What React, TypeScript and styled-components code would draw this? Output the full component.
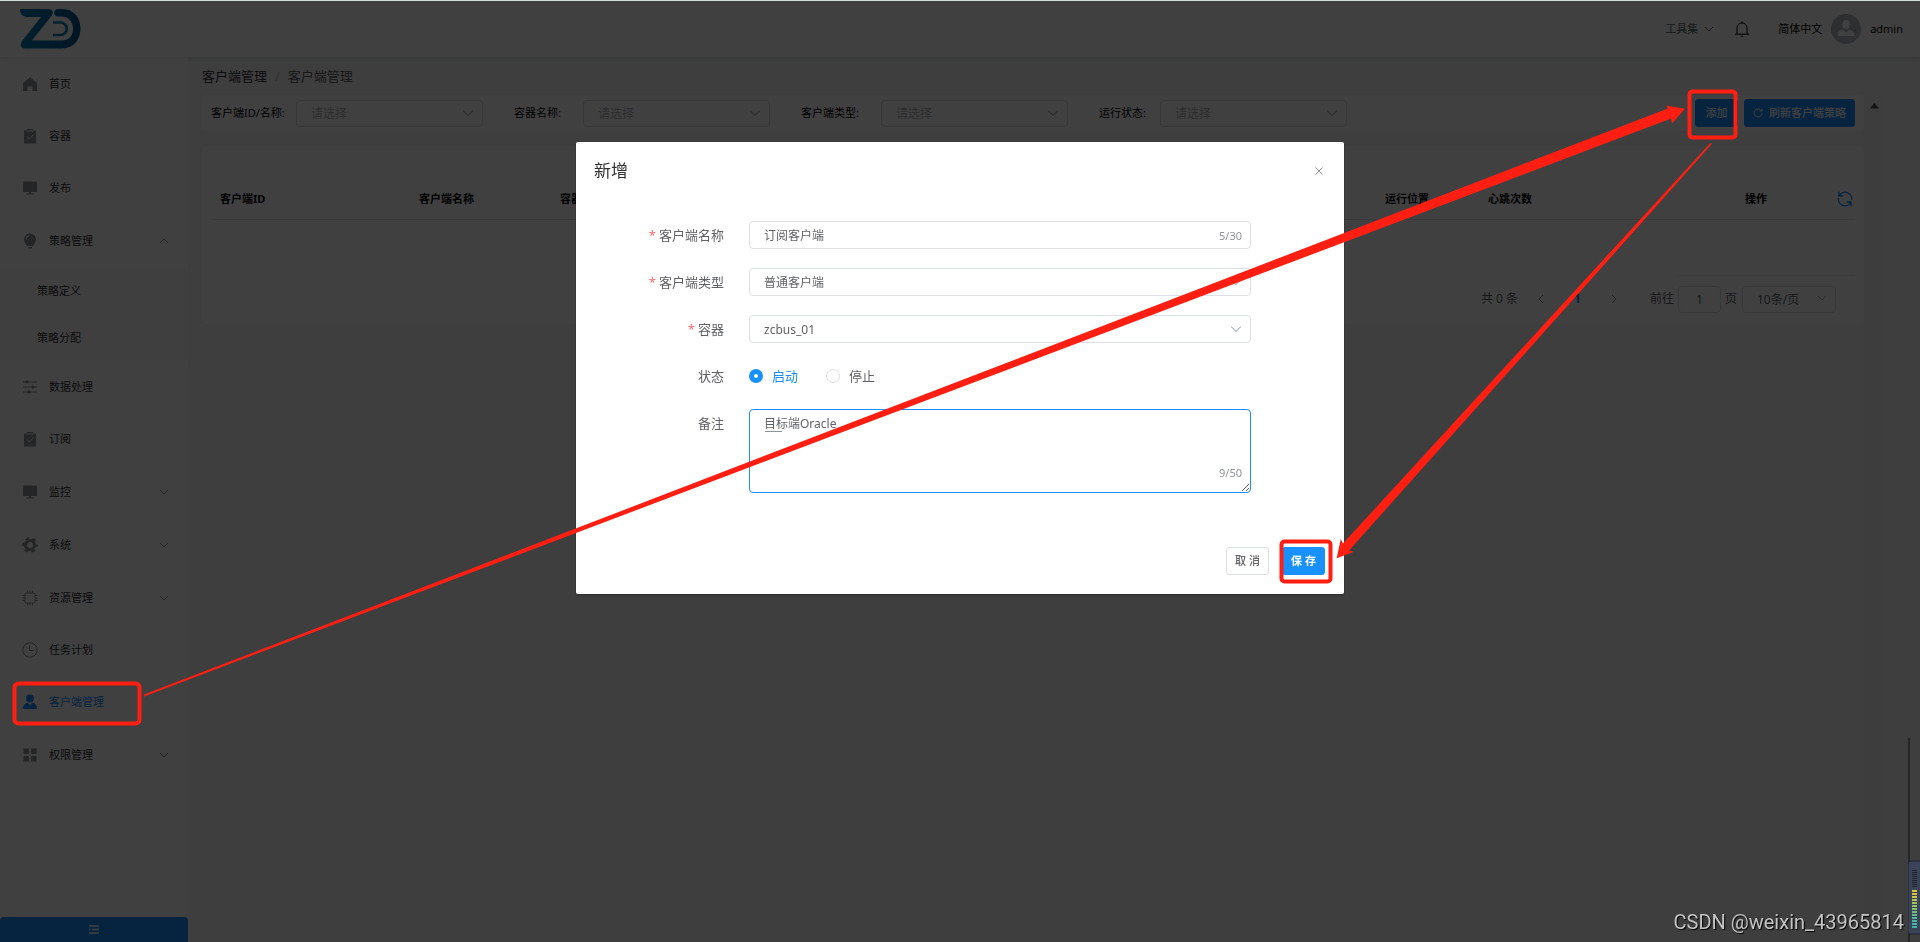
import React, { useState } from 'react';
import styled, { createGlobalStyle, css } from 'styled-components';

const BLUE = '#1890ff';
const RED = '#ff1f12';

const GlobalStyle = createGlobalStyle`
  * { box-sizing: border-box; }
  body {
    margin: 0;
    background: #f5f5f5;
    color: #303133;
    font: 11px/16px "Noto Sans", "Noto Sans CJK SC", sans-serif;
  }
  button, input, select, textarea { font: inherit; color: inherit; margin: 0; }
  a { color: inherit; text-decoration: none; }
`;

/* ---------- page frame ---------- */

const Page = styled.div`
  min-height: 100vh;
  display: flex;
  flex-direction: column;
  overflow: hidden;
`;

const Header = styled.header`
  height: 57px;
  padding: 0 17px 0 19px;
  display: flex;
  align-items: center;
  justify-content: space-between;
  background: #fff;
  box-shadow: 0 1px 6px rgba(0, 21, 41, 0.12);
  position: relative;
`;

const HeaderTools = styled.div`
  display: flex;
  align-items: center;
  color: #000;
`;

const PlainButton = styled.button<{ $muted?: boolean; $gap?: number }>`
  border: 0;
  padding: 0;
  background: none;
  display: flex;
  align-items: center;
  gap: 6px;
  color: ${(p) => (p.$muted ? '#606266' : 'inherit')};
  margin-right: ${(p) => p.$gap ?? 0}px;
`;

const Avatar = styled.span`
  width: 30px;
  height: 30px;
  border-radius: 50%;
  overflow: hidden;
  background: #b4bac4;
  margin-right: 9px;
`;

const Body = styled.div`
  flex: 1;
  display: flex;
`;

const Sidebar = styled.aside`
  width: 188px;
  flex: none;
  display: flex;
  flex-direction: column;
  justify-content: space-between;
  background: #fff;
`;

const Menu = styled.nav`
  padding-top: 1px;
`;

const MenuLink = styled.a<{ $group?: boolean; $active?: boolean }>`
  height: ${(p) => (p.$group ? 53 : 52)}px;
  padding: 0 19px 0 22px;
  display: flex;
  align-items: center;
  gap: 11px;
  color: ${(p) => (p.$active ? BLUE : '#303133')};

  > svg { color: ${(p) => (p.$active ? BLUE : '#909399')}; flex: none; }
`;

const MenuLabel = styled.span`
  flex: 1;
`;

const SubMenu = styled.div`
  background: #fbfbfb;
`;

const SubLink = styled.a`
  height: 47px;
  padding-left: 37px;
  display: flex;
  align-items: center;
`;

const CollapseButton = styled.button`
  height: 25px;
  border: 0;
  border-radius: 4px 4px 0 0;
  background: ${BLUE};
  color: #fff;
  display: flex;
  align-items: center;
  justify-content: center;
`;

const Main = styled.main`
  flex: 1;
  min-width: 0;
  padding: 11px 36px 0 14px;
`;

const Crumbs = styled.nav`
  height: 16px;
  display: flex;
  align-items: center;
  gap: 8px;
  font-size: 13px;
  color: #606266;
`;

const CrumbLink = styled.a`
  color: #303133;
`;

const Slash = styled.span`
  color: #c0c4cc;
`;

const Scroller = styled.div`
  margin-top: 11px;
  display: flex;
`;

const Panels = styled.div`
  flex: 1;
  min-width: 0;
  display: flex;
  flex-direction: column;
  gap: 15px;
`;

const ScrollTrack = styled.div`
  width: 20px;
  height: calc(100vh - 95px);
  margin-bottom: -600px;
  padding-top: 8px;
  background: #f1f1f1;
  display: flex;
  justify-content: center;
  color: #505050;
`;

const Card = styled.section`
  background: #fff;
  border-radius: 5px;
`;

/* ---------- filters ---------- */

const FilterBar = styled(Card)`
  height: 36px;
  padding: 0 9px;
  display: flex;
  align-items: center;
  justify-content: space-between;
`;

const FilterForm = styled.form`
  display: flex;
  gap: 31px;
`;

const Filter = styled.div`
  display: flex;
  align-items: center;
`;

const FilterLabel = styled.label<{ $width: number }>`
  width: ${(p) => p.$width}px;
  color: #000;
`;

const SelectBox = styled.span<{ $width?: number }>`
  position: relative;
  display: block;
  width: ${(p) => (p.$width ? `${p.$width}px` : '100%')};
  color: #b4b8bf;

  > svg {
    position: absolute;
    right: 9px;
    top: 50%;
    margin-top: -6px;
    pointer-events: none;
  }
`;

const field = css`
  display: block;
  width: 100%;
  height: 28px;
  border: 1px solid #dcdfe6;
  border-radius: 4px;
  background: #fff;
  padding: 0 14px;
  font-size: 12px;
  color: #606266;
  outline: none;
`;

const Select = styled.select<{ $empty?: boolean; $short?: boolean }>`
  ${field}
  appearance: none;
  padding-top: 1px;
  height: ${(p) => (p.$short ? 27 : 28)}px;
  color: ${(p) => (p.$empty ? '#b4b8bf' : '#606266')};
`;

const Actions = styled.div`
  display: flex;
  gap: 6px;
`;

const Button = styled.button<{ $primary?: boolean; $bold?: boolean }>`
  height: 28px;
  min-width: 43px;
  justify-content: center;
  padding: 0 8px;
  border: 1px solid ${(p) => (p.$primary ? BLUE : '#dcdfe6')};
  border-radius: 3px;
  background: ${(p) => (p.$primary ? BLUE : '#fff')};
  color: ${(p) => (p.$primary ? '#fff' : '#606266')};
  font-weight: ${(p) => (p.$bold ? 700 : 500)};
  display: flex;
  align-items: center;
  gap: 6px;
  white-space: nowrap;
`;

/* ---------- table ---------- */

const TableCard = styled(Card)`
  height: 178px;
  padding: 34px 9px 0;
`;

const Table = styled.table`
  width: 100%;
  table-layout: fixed;
  border-collapse: collapse;
`;

const Th = styled.th<{ $op?: boolean }>`
  height: 39px;
  padding: ${(p) => (p.$op ? '0 2px 0 68px' : '0 9px')};
  text-align: left;
  font-weight: 700;
  color: #000;
  border-bottom: 1px solid #e4e6eb;
`;

const OpHead = styled.div`
  display: flex;
  align-items: center;
  justify-content: space-between;
`;

const IconButton = styled.button`
  border: 0;
  padding: 0;
  background: none;
  display: flex;
  color: ${BLUE};
`;

const Td = styled.td<{ $line?: boolean }>`
  height: 56px;
  padding: 0;
  border-bottom: 1px solid ${(p) => (p.$line ? '#ebeef5' : 'transparent')};
`;

const Pager = styled.div`
  margin-top: 10px;
  padding-right: 19px;
  display: flex;
  align-items: center;
  justify-content: flex-end;
  font-size: 12px;
  color: #606266;
`;

const PagerNav = styled.div`
  display: flex;
  align-items: center;
  gap: 28px;
  margin: 0 31px 0 18px;
`;

const PagerButton = styled.button<{ $current?: boolean }>`
  border: 0;
  padding: 0;
  background: none;
  display: flex;
  color: ${(p) => (p.$current ? BLUE : '#909399')};
  font-weight: ${(p) => (p.$current ? 700 : 400)};
`;

const JumpLabel = styled.label`
  display: flex;
  align-items: center;
  gap: 4px;
  margin-right: 5px;
`;

const JumpInput = styled.input`
  ${field}
  width: 43px;
  height: 27px;
  padding: 0;
  text-align: center;
`;

/* ---------- dialog ---------- */

const Overlay = styled.div`
  position: fixed;
  inset: 0;
  padding-top: 15vh;
  background: rgba(0, 0, 0, 0.75);
  display: flex;
  justify-content: center;
  align-items: flex-start;
`;

const Dialog = styled.section`
  width: 40%;
  margin-top: 1px;
  background: #fff;
  border-radius: 2px;
  box-shadow: 0 1px 3px rgba(0, 0, 0, 0.3);
  padding: 17px 19px 19px 18px;
`;

const DialogHead = styled.header`
  display: flex;
  align-items: center;
  justify-content: space-between;
  height: 23px;
`;

const DialogTitle = styled.h2`
  margin: 0;
  font-size: 17px;
  line-height: 23px;
  font-weight: 400;
  color: #303133;
`;

const CloseButton = styled.button`
  border: 0;
  background: none;
  padding: 0;
  display: flex;
  color: #909399;
`;

const Form = styled.form`
  margin-top: 39px;
  padding: 0 74px 0 37px;
  display: flex;
  flex-direction: column;
  gap: 19px;
`;

const FormRow = styled.div`
  display: grid;
  grid-template-columns: 93px 1fr;
  column-gap: 25px;
  align-items: start;
`;

const FormLabel = styled.label<{ $required?: boolean }>`
  text-align: right;
  font-size: 13px;
  line-height: 28px;
  color: #606266;
  white-space: nowrap;

  ${(p) =>
    p.$required &&
    css`
      &::before {
        content: '*';
        color: #f56c6c;
        margin-right: 3px;
      }
    `}
`;

const Control = styled.div`
  position: relative;
`;

const TextInput = styled.input`
  ${field}
  padding-right: 50px;
`;

const TextArea = styled.textarea`
  ${field}
  height: 84px;
  padding: 5px 14px;
  line-height: 17px;
  border-color: ${BLUE};
  resize: vertical;
`;

const Counter = styled.span<{ $low?: boolean }>`
  position: absolute;
  right: 9px;
  bottom: ${(p) => (p.$low ? 12 : 5)}px;
  color: #909399;
`;

const Composition = styled.span`
  position: absolute;
  left: 16px;
  top: 22px;
  width: 17px;
  height: 1px;
  background: #909399;
`;

const Radios = styled.div`
  height: 28px;
  display: flex;
  align-items: center;
  gap: 28px;
`;

const RadioLabel = styled.label<{ $on: boolean }>`
  display: flex;
  align-items: center;
  gap: 9px;
  font-size: 13px;
  color: ${(p) => (p.$on ? BLUE : '#606266')};
`;

const Radio = styled.input`
  appearance: none;
  width: 14px;
  height: 14px;
  border-radius: 50%;
  border: 1px solid #dcdfe6;
  background: #fff;

  &:checked { border: 5px solid ${BLUE}; }
`;

const DialogFoot = styled.footer`
  margin-top: 54px;
  display: flex;
  justify-content: flex-end;
  gap: 13px;
`;

/* ---------- annotations ---------- */

const Marks = styled.svg`
  position: fixed;
  left: 0;
  top: 0;
  pointer-events: none;
`;

const TopLine = styled.div`
  position: fixed;
  inset: 0 0 auto;
  height: 1px;
  background: #d5d9d7;
`;

const Watermark = styled.div`
  position: fixed;
  right: 16px;
  bottom: 8px;
  font: 20px/24px Roboto, sans-serif;
  color: #c4c4c4;
  text-shadow: 1px 1px 1px #000;
`;

const Gadget = styled.svg`
  position: fixed;
  right: 0;
  bottom: 0;
`;

/* ---------- icons ---------- */

const Chevron = ({ up, size = 10 }: { up?: boolean; size?: number }) => (
  <svg width={size} height={size} viewBox="0 0 10 10" fill="none" stroke="currentColor">
    <path d={up ? 'M1 7l4-4 4 4' : 'M1 3l4 4 4-4'} />
  </svg>
);

const shapes: Record<string, React.ReactNode> = {
  home: <path d="M8 1.2 1 7v8h4.6v-4.6h4.8V15H15V7z" fill="currentColor" />,
  check: (
    <>
      <path d="M2 2.5h3V1h6v1.500h3V15.500H2z" fill="currentColor" />
      <path d="M5 3h6M5 8.500l2.500 2.500 4-4.500" fill="none" stroke="#fff" />
    </>
  ),
  monitor: <path d="M1 1.500h14v10.500H1zM7 12h2v1.500h3v1H4v-1h3z" fill="currentColor" />,
  bulb: (
    <>
      <path d="M8 .5a6 6 0 0 1 6 6c0 2.600-1.800 4-3 6.500H5C3.800 10.500 2 9.100 2 6.500a6 6 0 0 1 6-6zM6 14h4v1.500H6z" fill="currentColor" />
      <path d="M4 6.500a4 4 0 0 1 3.500-4" fill="none" stroke="#fff" />
    </>
  ),
  sliders: (
    <g stroke="currentColor" fill="currentColor">
      <path d="M1 3h14M1 8h14M1 13h14" />
      <circle cx="5" cy="3" r="1.200" /><circle cx="11" cy="8" r="1.200" /><circle cx="7" cy="13" r="1.200" />
    </g>
  ),
  gear: (
    <g fill="none" stroke="currentColor">
      <circle cx="8" cy="8" r="4.500" strokeWidth="3" />
      <circle cx="8" cy="8" r="6.500" strokeWidth="2.600" strokeDasharray="3.400 3.407" strokeDashoffset="1.700" />
    </g>
  ),
  chip: (
    <g fill="none" stroke="currentColor">
      <rect x="3" y="3" width="10" height="10" rx="1.500" />
      <path d="M5.500 3V.5M8 3V.5M10.500 3V.5M5.500 15.500V13M8 15.500V13M10.500 15.500V13M3 5.500H.5M3 8H.5M3 10.500H.5M15.500 5.500H13M15.500 8H13M15.500 10.500H13" />
    </g>
  ),
  clock: (
    <g fill="none" stroke="currentColor">
      <circle cx="8" cy="8" r="7.200" />
      <path d="M7.500 3.500v5h4" />
    </g>
  ),
  user: (
    <>
      <circle cx="8" cy="4.500" r="3.900" fill="currentColor" />
      <path d="M1 15c0-3.600 1.500-5.500 4.500-6.500L8 11l2.500-2.500C13.500 9.500 15 11.400 15 15z" fill="currentColor" />
    </>
  ),
  grid: <path d="M1.500 1.500h5.500v5.500H1.500zM9 1.500h5.500v5.500H9zM1.500 9h5.500v5.500H1.500zM9 9h5.500v5.500H9z" fill="currentColor" />,
};

const Icon = ({ name, size = 16 }: { name: string; size?: number }) => (
  <svg width={size} height={size} viewBox="0 0 16 16" aria-hidden>
    {shapes[name]}
  </svg>
);

const Logo = () => (
  <svg width="62" height="41" viewBox="0 0 62 41" aria-label="ZD">
    <defs>
      <linearGradient id="zd" x1="0" x2="1">
        <stop offset="0" stopColor="#0080b8" />
        <stop offset="1" stopColor="#00548c" />
      </linearGradient>
    </defs>
    <path d="M1 1h28c5 0 6 4 3 7.500L13 32.500h30c8 0 11-6 11-12s-4-12-11-12h-4c-5 0-5-7.500 0-7.500h4c12 0 18.500 9 18.500 19.500S55 40.500 43 40.500H6C1 40.500 1 35.500 3.500 32.500L22 9H8C3 9 1 5 1 1z" fill="url(#zd)" />
    <path d="M34 14.500h7.500a6.200 6.200 0 0 1 0 12.500H34" fill="none" stroke="#0080b8" strokeWidth="2.600" />
  </svg>
);

/* ---------- data ---------- */

type Entry = { icon: string; label: string; open?: boolean; group?: boolean; active?: boolean };

const menu: Entry[] = [
  { icon: 'home', label: '首页' },
  { icon: 'check', label: '容器' },
  { icon: 'monitor', label: '发布' },
  { icon: 'bulb', label: '策略管理', group: true, open: true },
  { icon: 'sliders', label: '数据处理' },
  { icon: 'check', label: '订阅' },
  { icon: 'monitor', label: '监控', group: true },
  { icon: 'gear', label: '系统', group: true },
  { icon: 'chip', label: '资源管理', group: true },
  { icon: 'clock', label: '任务计划' },
  { icon: 'user', label: '客户端管理', active: true },
  { icon: 'grid', label: '权限管理', group: true },
];

const filters = [
  { id: 'client', label: '客户端ID/名称:', width: 85 },
  { id: 'container', label: '容器名称:', width: 69 },
  { id: 'kind', label: '客户端类型:', width: 80 },
  { id: 'state', label: '运行状态:', width: 61 },
];

const meterColors = ['#d8c23a', '#d8c23a', '#c9c548', '#b4c650', '#a5c558', '#96c45f', '#86c268', '#74bf74', '#60bc86', '#4fba96', '#47b8a0', '#3fb6a4', '#3fb6a4'];

export default function App() {
  const [status, setStatus] = useState('on');
  const [name, setName] = useState('订阅客户端');
  const [note, setNote] = useState('目标端Oracle');

  return (
    <>
      <GlobalStyle />
      <Page>
        <Header>
          <Logo />
          <HeaderTools>
            <PlainButton $muted $gap={20}>工具集<Chevron /></PlainButton>
            <PlainButton $gap={28} aria-label="通知">
              <svg width="16" height="16" viewBox="0 0 16 16" fill="none" stroke="currentColor">
                <path d="M3 13V7a5 5 0 0 1 10 0v6M.8 13.200h14.400M8 2V.4M6.800 15.200h2.400" />
              </svg>
            </PlainButton>
            <PlainButton $gap={9}>简体中文</PlainButton>
            <Avatar>
              <svg width="30" height="30" viewBox="0 0 30 30" fill="#fff">
                <ellipse cx="15" cy="10.500" rx="3.700" ry="4.500" />
                <path d="M6.500 22c.3-4 2-5.500 5-6.500l3.500 3 3.500-3c3 1 4.700 2.500 5 6.500z" />
              </svg>
            </Avatar>
            <span>admin</span>
          </HeaderTools>
        </Header>
        <Body>
          <Sidebar>
            <Menu>
              {menu.map((m) => (
                <React.Fragment key={m.label}>
                  <MenuLink href="#" $group={m.group} $active={m.active}>
                    <Icon name={m.icon} />
                    <MenuLabel>{m.label}</MenuLabel>
                    {m.group && <Chevron up={m.open} />}
                  </MenuLink>
                  {m.open && (
                    <SubMenu>
                      <SubLink href="#">策略定义</SubLink>
                      <SubLink href="#">策略分配</SubLink>
                    </SubMenu>
                  )}
                </React.Fragment>
              ))}
            </Menu>
            <CollapseButton aria-label="收起菜单">
              <svg width="10" height="9" viewBox="0 0 10 9" stroke="currentColor" strokeWidth="1.500">
                <path d="M0 1h10M3 4.500h7M0 8h10M0 4.500h1.500" />
              </svg>
            </CollapseButton>
          </Sidebar>
          <Main>
            <Crumbs>
              <CrumbLink href="#">客户端管理</CrumbLink>
              <Slash>/</Slash>
              <span>客户端管理</span>
            </Crumbs>
            <Scroller>
              <Panels>
                <FilterBar>
                  <FilterForm>
                    {filters.map((f) => (
                      <Filter key={f.id}>
                        <FilterLabel htmlFor={f.id} $width={f.width}>{f.label}</FilterLabel>
                        <SelectBox $width={187}>
                          <Select id={f.id} $empty $short><option>请选择</option></Select>
                          <Chevron size={12} />
                        </SelectBox>
                      </Filter>
                    ))}
                  </FilterForm>
                  <Actions>
                    <Button $primary>添加</Button>
                    <Button $primary>
                      <svg width="10" height="10" viewBox="0 0 10 10" fill="none" stroke="currentColor">
                        <path d="M8.500 3A4 4 0 1 0 9 5.500M9 .8V3H6.500" />
                      </svg>
                      刷新客户端策略
                    </Button>
                  </Actions>
                </FilterBar>
                <TableCard>
                  <Table>
                    <colgroup>
                      <col width="199" /><col width="141" /><col /><col width="103" /><col width="198" /><col width="178" />
                    </colgroup>
                    <thead>
                      <tr>
                        <Th>客户端ID</Th>
                        <Th>客户端名称</Th>
                        <Th>容器名称</Th>
                        <Th>运行位置</Th>
                        <Th>心跳次数</Th>
                        <Th $op>
                          <OpHead>
                            操作
                            <IconButton aria-label="刷新">
                              <svg width="16" height="16" viewBox="0 0 16 16" fill="none" stroke="currentColor" strokeWidth="1.400">
                                <path d="M2.500 4.500A6.500 6.500 0 0 1 14.500 9M1.500 7A6.500 6.500 0 0 0 13.500 11.500M2 .8V5h4.200M14 15.200V11H9.800" />
                              </svg>
                            </IconButton>
                          </OpHead>
                        </Th>
                      </tr>
                    </thead>
                    <tbody>
                      <tr><Td colSpan={5} /><Td $line /></tr>
                    </tbody>
                  </Table>
                  <Pager>
                    <span>共 0 条</span>
                    <PagerNav>
                      <PagerButton aria-label="上一页">
                        <svg width="10" height="10" viewBox="0 0 10 10" fill="none" stroke="currentColor"><path d="M7 1 3 5l4 4" /></svg>
                      </PagerButton>
                      <PagerButton $current>1</PagerButton>
                      <PagerButton aria-label="下一页">
                        <svg width="10" height="10" viewBox="0 0 10 10" fill="none" stroke="currentColor"><path d="M3 1l4 4-4 4" /></svg>
                      </PagerButton>
                    </PagerNav>
                    <JumpLabel>前往<JumpInput defaultValue="1" />页</JumpLabel>
                    <SelectBox $width={94}>
                      <Select $short aria-label="每页条数"><option>10条/页</option></Select>
                      <Chevron />
                    </SelectBox>
                  </Pager>
                </TableCard>
              </Panels>
              <ScrollTrack>
                <svg width="9" height="6" viewBox="0 0 9 6"><path d="M4.500 0 9 5.500H0z" fill="currentColor" /></svg>
              </ScrollTrack>
            </Scroller>
          </Main>
        </Body>
      </Page>

      <Overlay>
        <Dialog role="dialog" aria-labelledby="dialog-title">
          <DialogHead>
            <DialogTitle id="dialog-title">新增</DialogTitle>
            <CloseButton aria-label="关闭">
              <svg width="12" height="12" viewBox="0 0 12 12" stroke="currentColor"><path d="M2.500 2.500l7 7M9.500 2.500l-7 7" /></svg>
            </CloseButton>
          </DialogHead>
          <Form id="client-form">
            <FormRow>
              <FormLabel $required htmlFor="name">客户端名称</FormLabel>
              <Control>
                <TextInput id="name" maxLength={30} value={name} onChange={(e) => setName(e.target.value)} />
                <Counter>{name.length}/30</Counter>
              </Control>
            </FormRow>
            <FormRow>
              <FormLabel $required htmlFor="type">客户端类型</FormLabel>
              <SelectBox>
                <Select id="type"><option>普通客户端</option></Select>
                <Chevron size={12} />
              </SelectBox>
            </FormRow>
            <FormRow>
              <FormLabel $required htmlFor="box">容器</FormLabel>
              <SelectBox>
                <Select id="box"><option>zcbus_01</option></Select>
                <Chevron size={12} />
              </SelectBox>
            </FormRow>
            <FormRow>
              <FormLabel as="span">状态</FormLabel>
              <Radios role="radiogroup" aria-label="状态">
                <RadioLabel $on={status === 'on'}>
                  <Radio type="radio" name="status" checked={status === 'on'} onChange={() => setStatus('on')} />
                  启动
                </RadioLabel>
                <RadioLabel $on={status === 'off'}>
                  <Radio type="radio" name="status" checked={status === 'off'} onChange={() => setStatus('off')} />
                  停止
                </RadioLabel>
              </Radios>
            </FormRow>
            <FormRow>
              <FormLabel htmlFor="note">备注</FormLabel>
              <Control>
                <TextArea id="note" maxLength={50} value={note} onChange={(e) => setNote(e.target.value)} />
                <Composition />
                <Counter $low>{note.length}/50</Counter>
              </Control>
            </FormRow>
          </Form>
          <DialogFoot>
            <Button>取 消</Button>
            <Button $primary $bold>保 存</Button>
          </DialogFoot>
        </Dialog>
      </Overlay>

      <Marks width="1920" height="942" viewBox="0 0 1920 942" fill={RED} aria-hidden>
        <g fill="none" stroke={RED} strokeWidth="4">
          <rect x="14.500" y="683.500" width="125" height="40" rx="4" />
          <rect x="1689.500" y="91.500" width="46" height="46" rx="3" />
          <rect x="1281.500" y="541.500" width="49" height="40" rx="3" />
        </g>
        <path d="M144 694.500 1668 108.500 1666 105.500 1684.800 108.800 1672 123.500 1671 118.500 144 696.500z" />
        <path d="M1710.500 143 1343 543.500 1340.700 539 1336.700 558.300 1354 551.700 1349 550.500 1712 143.800z" />
      </Marks>
      <TopLine />
      <Gadget width="12" height="204" viewBox="0 0 12 204">
        <path d="M1 0v204" stroke="#262626" strokeWidth="2" />
        <rect x="0" y="123" width="16" height="73" rx="3" fill="#3a4358" stroke="#20242f" />
        {Array.from({ length: 9 }, (_, i) => (
          <rect key={i} x="4" y={132 + i * 2} width="5" height="1" fill="#20242f" />
        ))}
        {meterColors.map((c, i) => (
          <rect key={i} x="4" y={152 + i * 3} width="5" height="2" fill={c} />
        ))}
      </Gadget>
      <Watermark>CSDN @weixin_43965814</Watermark>
    </>
  );
}
